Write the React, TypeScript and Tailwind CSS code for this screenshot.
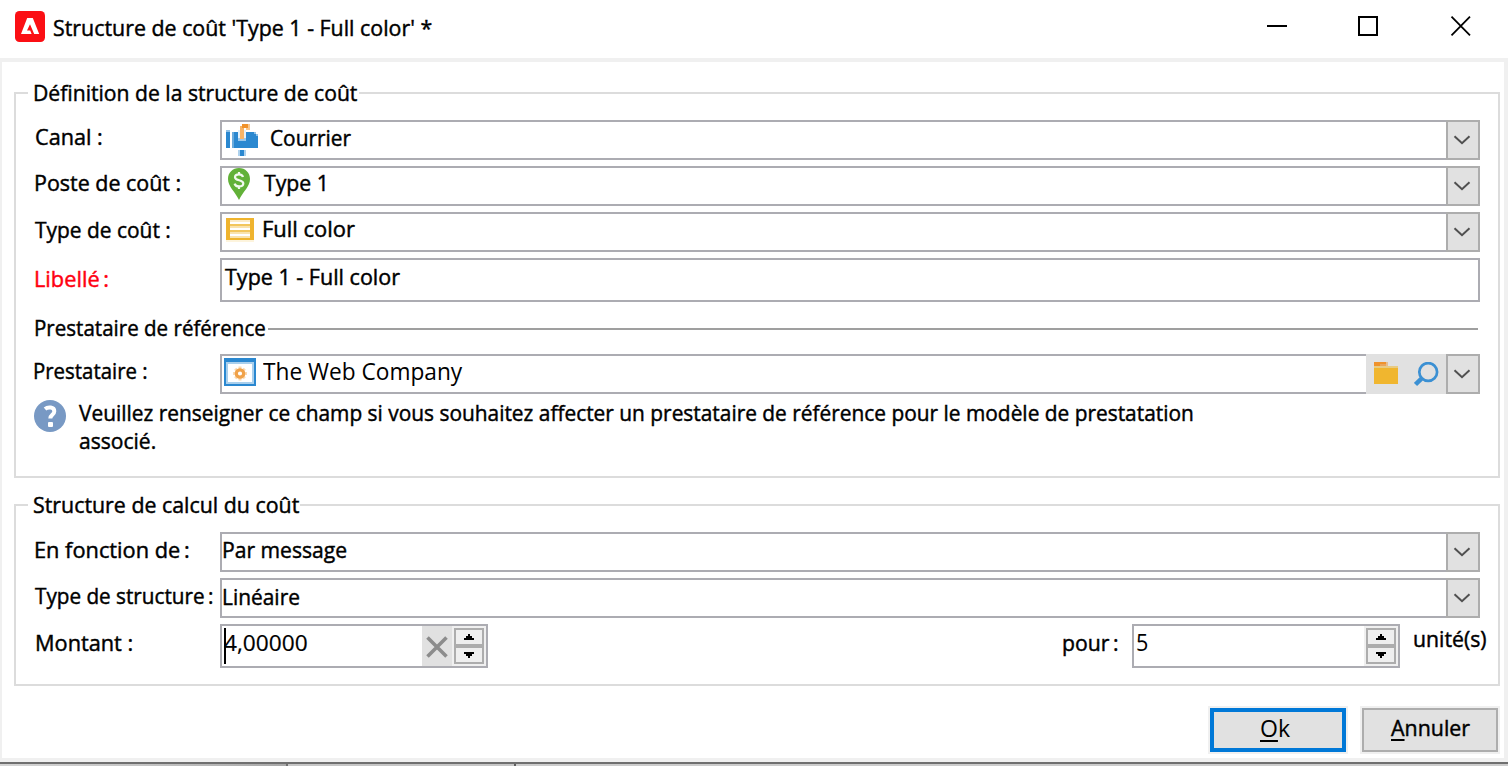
import type { ReactNode } from "react";

function T({ children, className = "", size = "text-[22px]" }: { children: ReactNode; className?: string; size?: string }) {
  return (
    <span className={`block h-7 origin-left whitespace-pre leading-7 ${size} ${className}`}>
      {children}
    </span>
  );
}

const bold = "[-webkit-text-stroke:0.45px_currentColor]";

function Colon() {
  return <span className="-ml-[2px]"> :</span>;
}

function Chevron() {
  return (
    <div className="flex h-full w-[34px] shrink-0 items-center justify-center border-2 border-[#adadad] bg-[#e1e1e1]">
      <svg width="18" height="12" viewBox="0 0 18 12" className="-ml-0.5" fill="none">
        <path d="M1.500 2.200 L9 9.200 L16.500 2.200" stroke="#505050" strokeWidth="2" />
      </svg>
    </div>
  );
}

function Combo({ children, tools }: { children: ReactNode; tools?: ReactNode }) {
  return (
    <div className="flex h-10 w-[1260px] shrink-0">
      <div className="flex min-w-0 flex-1 items-start border-2 border-r-0 border-[#acacb2] bg-white">
        {children}
      </div>
      {tools}
      <Chevron />
    </div>
  );
}

function Row({ label, children, className = "" }: { label: ReactNode; children: ReactNode; className?: string }) {
  return (
    <div className={`flex items-start ${className}`}>
      <div className="w-[188px] shrink-0">{label}</div>
      {children}
    </div>
  );
}

function Spinner() {
  return (
    <div className="flex h-full w-[34px] shrink-0 items-center bg-[#f0f0f0]">
      <div className="ml-0.5 flex h-9 w-[30px] flex-col border-2 border-[#adadad] bg-[#adadad]">
        <div className="flex h-[14px] items-end justify-center bg-[#efefef] pb-1">
          <svg width="10" height="6" viewBox="0 0 10 6" shapeRendering="crispEdges">
            <path d="M4 0h2v2h2v2h2v2H0V4h2V2h2z" fill="#000" />
          </svg>
        </div>
        <div className="mt-1 flex h-[14px] items-start justify-center bg-[#efefef] pt-1">
          <svg width="10" height="6" viewBox="0 0 10 6" shapeRendering="crispEdges">
            <path d="M0 0h10v2H8v2H6v2H4V4H2V2H0z" fill="#000" />
          </svg>
        </div>
      </div>
    </div>
  );
}

function Logo() {
  return (
    <svg width="30" height="31" viewBox="0 0 30 31" className="ml-[15px] mt-[11px] shrink-0">
      <rect width="30" height="31" rx="4.500" fill="#fb0f14" />
      <path fillRule="evenodd" d="M12.200 7h5.600l6.400 16H6zM15 13.200l-3 6.300h3.200l1.400 3.500h2.600z" fill="#fff" />
    </svg>
  );
}

function Mailbox() {
  return (
    <svg width="32" height="32" viewBox="0 0 32 32" className="ml-1 mt-0.5 shrink-0" shapeRendering="crispEdges">
      <rect y="6" width="4" height="18" fill="#2b88d0" />
      <rect y="6" width="4" height="2" fill="#8fc0e6" />
      <rect x="6" y="8" width="2" height="16" fill="#6aabdd" />
      <path d="M8 8h20v2h2v2h2v12H8z" fill="#2b88d0" />
      <rect x="28" y="8" width="2" height="2" fill="#8fc0e6" />
      <rect x="30" y="10" width="2" height="2" fill="#8fc0e6" />
      <rect x="12" y="6" width="8" height="10" fill="#e4f0f9" />
      <rect x="12" y="14" width="8" height="3" fill="#9cc8ea" />
      <path d="M14 2h4v13h-4z" fill="#f6b467" />
      <path d="M16 0h6v4h-6z" fill="#f0922b" />
      <path d="M22 0h2v6h-4V4h2z" fill="#f9c78d" />
      <rect x="12" y="26" width="8" height="6" fill="#aed2ee" />
      <rect x="14" y="26" width="4" height="6" fill="#2b88d0" />
    </svg>
  );
}

function Pin() {
  return (
    <svg width="22" height="32" viewBox="0 0 22 32" className="ml-1.5 shrink-0" fill="none">
      <path d="M11 0C4.700 0 0 4.700 0 11c0 7.500 7 12.500 11 21 4-8.500 11-13.500 11-21C22 4.700 17.300 0 11 0z" fill="#62b138" />
      <path d="M15 9c-.5-1.900-2-2.700-4-2.700-2.400 0-4 1.100-4 2.900 0 4.100 8.300 2 8.300 6.200 0 1.900-1.800 3-4.300 3-2.300 0-3.900-.9-4.400-2.800M11 4v3M11 18v3" stroke="#f2f9ee" strokeWidth="2.200" />
    </svg>
  );
}

function ListIcon() {
  return (
    <svg width="28" height="24" viewBox="0 0 28 24" className="ml-1 mt-1 shrink-0" shapeRendering="crispEdges">
      <rect width="28" height="22" fill="#efb42f" />
      <rect y="22" width="28" height="2" fill="#fdf4dd" />
      <rect x="4" y="4" width="20" height="14" fill="#fff" />
      <rect x="4" y="2" width="20" height="2" fill="#fbeccb" />
      <rect x="4" y="6" width="20" height="2" fill="#f2c65d" />
      <rect x="4" y="8" width="20" height="2" fill="#f9e3ae" />
      <rect x="4" y="12" width="20" height="2" fill="#f2c65d" />
      <rect x="4" y="14" width="20" height="2" fill="#f9e3ae" />
      <rect x="4" y="18" width="20" height="2" fill="#f9e3ae" />
    </svg>
  );
}

function WindowIcon() {
  return (
    <svg width="32" height="28" viewBox="0 0 32 28" className="ml-0.5 mt-0.5 shrink-0">
      <rect width="32" height="28" fill="#2b88d0" />
      <rect x="2" y="4" width="28" height="22" fill="#a9cfec" />
      <rect x="4" y="6" width="24" height="18" fill="#fff" />
      <g stroke="#fad9b1" strokeWidth="3">
        <path d="M16 8.500v14M9 15.500h14M11.200 10.700l9.600 9.600M20.800 10.700l-9.600 9.600" />
      </g>
      <circle cx="16" cy="15.500" r="3.700" fill="#fff" stroke="#f0a24a" strokeWidth="3.200" />
    </svg>
  );
}

function ProviderTools() {
  return (
    <div className="flex h-full w-20 shrink-0 items-start bg-[#e1e1e1]">
      <svg width="24" height="22" viewBox="0 0 24 22" className="ml-2 mt-2" shapeRendering="crispEdges">
        <rect width="12" height="4" fill="#ef922c" />
        <rect y="2" x="6" width="6" height="2" fill="#eaa55c" />
        <rect x="12" width="2" height="4" fill="#e5bd91" />
        <rect y="4" width="24" height="2" fill="#e8cb83" />
        <rect y="6" width="24" height="16" fill="#f0b62f" />
      </svg>
      <svg width="26" height="26" viewBox="0 0 26 26" className="ml-4 mt-2" fill="none" stroke="#3b90d3">
        <circle cx="14.200" cy="10" r="8.900" strokeWidth="2.700" />
        <path d="M8 16.200L1.500 22.500" strokeWidth="4.500" />
      </svg>
    </div>
  );
}

function Help() {
  return (
    <svg width="32" height="32" viewBox="0 0 32 32" className="shrink-0">
      <circle cx="16" cy="16" r="16" fill="#7899c4" />
      <path d="M11 9c2.900-2.400 9.300-2.200 9.300 2.200 0 3.700-4 3.500-4 7.300" fill="none" stroke="#fff" strokeWidth="4" />
      <rect x="14" y="22" width="5" height="5" rx="1" fill="#fff" />
    </svg>
  );
}

export default function App() {
  return (
    <div className="flex h-[766px] w-[1508px] flex-col overflow-hidden bg-white font-['Open_Sans',sans-serif] text-black">
      <header className="flex h-[58px] shrink-0 items-start">
        <Logo />
        <T className={`ml-2 mt-[13px] scale-x-[0.972] ${bold}`}>Structure de coût 'Type 1 - Full color' *</T>
        <svg width="204" height="20" viewBox="0 0 204 20" className="ml-auto mr-[37px] mt-4 shrink-0" fill="none" stroke="#000">
          <path d="M0 10h20" strokeWidth="2" />
          <path d="M92 1h18v18H92z" strokeWidth="2" />
          <path d="M184.500 .7l18.500 18.600M203 .7l-18.500 18.600" strokeWidth="1.800" />
        </svg>
      </header>

      <main className="flex h-[704px] shrink-0 flex-col border-b-4 border-l-2 border-r-4 border-t-4 border-[#f0f0f0] pl-3 pr-1">
        <section className="mt-[30px] h-[386px] w-[1486px] shrink-0 border-2 border-[#dcdcdc] pl-[18px]">
          <div className="-ml-1.5 -mt-4 flex w-[331px] bg-white pl-[5px]">
            <T className={`scale-x-[0.961] ${bold}`}>Définition de la structure de coût</T>
          </div>

          <Row className="mt-[14px] h-[46px] -ml-0.5" label={<T className={`ml-[3px] mt-0.5 scale-x-[0.984] ${bold}`}>Canal :</T>}>
            <Combo>
              <Mailbox />
              <T className={`ml-3 mt-px scale-x-[0.947] ${bold}`}>Courrier</T>
            </Combo>
          </Row>
          <Row className="h-[46px] -ml-0.5" label={<T className={`ml-[2px] mt-[2px] scale-x-[0.975] ${bold}`}>Poste de coût :</T>}>
            <Combo>
              <Pin />
              <T className={`ml-[14px] scale-x-[0.965] ${bold}`}>Type 1</T>
            </Combo>
          </Row>
          <Row className="h-[46px] -ml-0.5" label={<T className={`ml-[3px] mt-[3px] scale-x-[0.951] ${bold}`}>Type de coût :</T>}>
            <Combo>
              <ListIcon />
              <T className={`ml-[8px] scale-x-[0.997] ${bold}`}>Full color</T>
            </Combo>
          </Row>
          <Row className="h-[44px] -ml-0.5" label={<T className={`ml-[2px] mt-[6px] scale-x-[0.99] text-[#ff0010] ${bold}`}>Libellé<Colon /></T>}>
            <div className="h-11 w-[1260px] border-2 border-[#acacb2] bg-white pl-[3px] pt-0.5">
              <T className={`scale-x-[0.978] ${bold}`}>Type 1 - Full color</T>
            </div>
          </Row>

          <div className="mt-[11px] flex h-7 items-start">
            <T className={`w-[234px] shrink-0 scale-x-[0.934] ${bold}`}>Prestataire de référence</T>
            <div className="mt-[15px] h-0.5 w-[1210px] shrink-0 bg-[#9f9f9f]" />
          </div>

          <Row className="mt-[13px] h-10 -ml-0.5" label={<T className={`ml-px mt-[2px] scale-x-[0.927] ${bold}`}>Prestataire :</T>}>
            <Combo tools={<ProviderTools />}>
              <WindowIcon />
              <T size="text-[24px]" className="ml-[7px] mt-px scale-x-[0.945]">The Web Company</T>
            </Combo>
          </Row>

          <div className="mt-[6px] flex items-start">
            <Help />
            <div className="-mt-[2px] ml-[13px]">
              <T className={`scale-x-[0.949] ${bold}`}>
                Veuillez renseigner ce champ si vous souhaitez affecter un prestataire de référence pour le modèle de prestatation
              </T>
              <T className={`scale-x-[0.957] ${bold}`}>associé.</T>
            </div>
          </div>
        </section>

        <section className="mt-[26px] h-[182px] w-[1486px] shrink-0 border-2 border-[#dcdcdc] pl-[18px]">
          <div className="-ml-1.5 -mt-4 flex w-[272px] bg-white pl-[5px]">
            <T className={`scale-x-[0.971] ${bold}`}>Structure de calcul du coût</T>
          </div>

          <Row className="mt-[14px] h-[46px] -ml-0.5" label={<T className={`ml-[2px] mt-[3px] scale-x-[0.99] ${bold}`}>En fonction de<Colon /></T>}>
            <Combo>
              <T className={`mt-px scale-x-[0.96] ${bold}`}>Par message</T>
            </Combo>
          </Row>
          <Row className="h-[46px] -ml-0.5" label={<T className={`ml-[3px] mt-[3px] scale-x-[0.941] ${bold}`}>Type de structure<Colon /></T>}>
            <Combo>
              <T className={`mt-[2px] scale-x-[0.95] ${bold}`}>Linéaire</T>
            </Combo>
          </Row>
          <Row className="h-11 -ml-0.5" label={<T className={`ml-[3px] mt-[4px] scale-x-[0.988] ${bold}`}>Montant :</T>}>
            <div className="flex h-11 w-[268px] shrink-0 border-2 border-[#acacb2] bg-white">
              <div className="ml-0.5 mt-0.5 h-9 w-0.5 shrink-0 bg-black" />
              <T className="-ml-[2px] mt-[2px] scale-x-[1.03] [-webkit-text-stroke:0.2px_currentColor]">4,00000</T>
              <div className="ml-auto flex h-full w-[30px] shrink-0 items-center justify-center bg-[#e1e1e1]">
                <svg width="22" height="22" viewBox="0 0 22 22" className="mt-px">
                  <path d="M1.500 1.500l19 19M20.500 1.500l-19 19" stroke="#8c8c8c" strokeWidth="3.600" />
                </svg>
              </div>
              <Spinner />
            </div>
            <T className={`ml-[574px] mt-[4px] w-[70px] shrink-0 scale-x-[0.965] ${bold}`}>pour<Colon /></T>
            <div className="flex h-11 w-[268px] shrink-0 border-2 border-[#acacb2] bg-white">
              <T size="text-[24px]" className="ml-[2px] mt-[2px] scale-x-[0.9]">5</T>
              <div className="ml-auto h-full">
                <Spinner />
              </div>
            </div>
            <T className={`ml-[13px] w-[80px] shrink-0 scale-x-[0.965] ${bold}`}>unité(s)</T>
          </Row>
        </section>

        <footer className="mt-5 flex justify-end">
          <button className="mr-3 h-12 w-[140px] border-2 border-[#f0f0f0]">
            <span className="flex h-full items-start justify-center border-4 border-[#0078d7] bg-[#e1e1e1] pt-[2px] pr-1">
              <T size="text-[24px]" className="origin-center scale-x-[0.96]">
                <span className="underline decoration-2 underline-offset-[3px]">O</span>k
              </T>
            </span>
          </button>
          <button className="h-12 w-[140px] border-2 border-[#f0f0f0]">
            <span className="flex h-full items-start justify-center border-2 border-[#adadad] bg-[#e1e1e1] pl-1 pt-[3px]">
              <T className={`origin-center scale-x-[0.972] ${bold}`}>
                <span className="underline decoration-2 underline-offset-[3px]">A</span>nnuler
              </T>
            </span>
          </button>
        </footer>
      </main>

      <div className="flex h-1 shrink-0 items-end border-t-2 border-[#6f6f6f] bg-[#cccccc]">
        <div className="h-0.5 w-[286px] bg-linear-to-r from-[#d4d4d4] via-[#c4c4c4] to-[#a8a8a8]" />
        <div className="h-0.5 w-0.5 bg-[#707070]" />
        <div className="h-0.5 w-[226px] bg-[#c6c6c6]" />
        <div className="h-0.5 w-0.5 bg-[#606060]" />
      </div>
    </div>
  );
}
